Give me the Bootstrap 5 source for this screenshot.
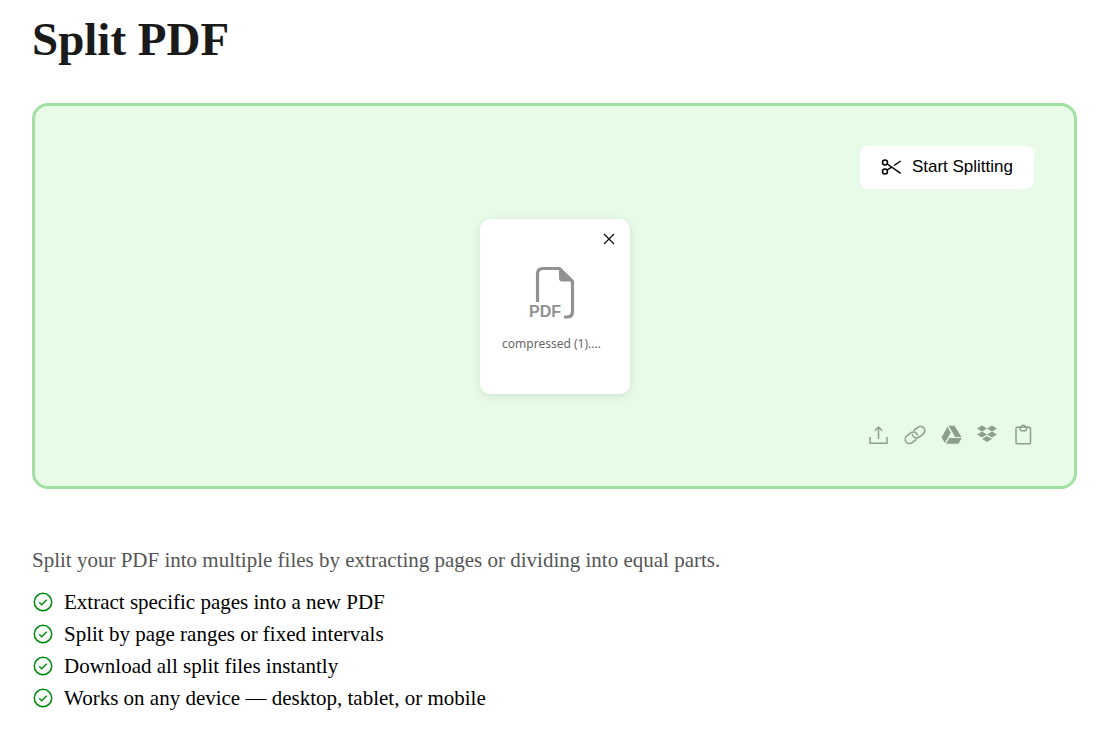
<!DOCTYPE html>
<html lang="en">
<head>
<meta charset="utf-8">
<meta name="viewport" content="width=device-width, initial-scale=1">
<title>Split PDF</title>
<link href="https://cdn.jsdelivr.net/npm/bootstrap@5.3.0/dist/css/bootstrap.min.css" rel="stylesheet">
<style>
  body { font-family: Georgia, "Liberation Serif", serif; color: #000; background: #fff; }
  .page { padding: 13px 27px 20px 32px; }
  .page-title { font-size: 47px; line-height: 52px; font-weight: 700; color: #1a1a1a; margin-bottom: 38px; }
  .drop-zone { background: #e8fbe8; border: 3px solid #a0e0a0; border-radius: 16px; padding: 40px; gap: 30px; margin-bottom: 57px; }
  .start-btn { --bs-btn-color: #000; --bs-btn-bg: #fff; --bs-btn-hover-bg: #f4f4f4; font: 17px/25px "Liberation Sans", sans-serif; padding: 7px 20px 9px; border-radius: 8px; gap: 9px; }
  .file-card { width: 150px; height: 175px; background: #fff; border-radius: 10px; box-shadow: 0 2px 10px rgba(0, 0, 0, .1); padding: 10px 16px 0 10px; }
  .close-btn { width: 22px; height: 20px; margin-right: -6px; }
  .file-name { font: 12px/18px "Noto Sans", sans-serif; color: #666; }
  .file-icon { margin: 14px 0 12px; }
  .sources { gap: 14px; color: #8c9f8c; }
  .plain-btn { background: none; border: 0; padding: 0; color: inherit; display: block; line-height: 0; }
  .source-btn { width: 22px; height: 22px; }
  .intro { font-size: 21px; line-height: 28px; color: #555; margin-bottom: 14px; }
  .features { font-size: 21px; line-height: 28px; }
  .features li { gap: 10px; }
</style>
</head>
<body>
<main class="page">
  <h1 class="page-title">Split PDF</h1>

  <section class="drop-zone d-flex flex-column" aria-label="Files">
    <button type="button" class="btn start-btn d-inline-flex align-items-center align-self-end">
      <svg width="22" height="22" viewBox="0 0 22 22" fill="none" stroke="currentColor" stroke-width="1.5" aria-hidden="true">
        <circle cx="4" cy="6.500" r="2.500"/><circle cx="4" cy="15.500" r="2.500"/>
        <path d="M6.200 8 19.700 17.300M6.200 14l4.800-3.200M13 9.500 19.700 5"/>
      </svg>
      <span>Start Splitting</span>
    </button>

    <article class="file-card d-flex flex-column align-items-center align-self-center">
      <button type="button" class="plain-btn close-btn align-self-end" aria-label="Remove file">
        <svg width="22" height="20" viewBox="0 0 22 20" fill="none" stroke="#111" stroke-width="1.3"><path d="m6 5 10 10M16 5 6 15"/></svg>
      </button>
      <svg class="file-icon" width="50" height="60" viewBox="0 0 50 60" fill="none" aria-hidden="true">
        <path d="M10.500 39V11q0-5.500 5.500-5.500H32.500L45.500 18.500V48.500q0 5.500-5.500 5.500H37" stroke="#919191" stroke-width="3.200"/>
        <path d="M32 4.500 46.500 18.500H35.500Q32 18.500 32 15Z" fill="#919191"/>
        <text x="2" y="54" font-family="Liberation Sans, sans-serif" font-size="16" font-weight="700" fill="#919191">PDF</text>
      </svg>
      <div class="file-name">compressed (1)....</div>
    </article>

    <div class="sources d-flex align-self-end">
      <button type="button" class="plain-btn source-btn" aria-label="Upload">
        <svg width="22" height="22" viewBox="0 0 22 22" fill="none" stroke="currentColor" stroke-width="1.5"><path d="M2 13v6.200h17V13M10.500 15V3M6.700 6.700 10.500 3l3.800 3.700"/></svg>
      </button>
      <button type="button" class="plain-btn source-btn" aria-label="Add from link">
        <svg width="22" height="22" viewBox="0 0 22 22" fill="none" stroke="currentColor" stroke-width="1.5" stroke-linecap="round"><g transform="rotate(-38 11 11)"><path d="M9 15.300H4a4.300 4.300 0 0 1 0-8.600H9a4.300 4.300 0 0 1 3.800 6.300"/><path d="M13 6.700h5a4.300 4.300 0 0 1 0 8.600H13a4.300 4.300 0 0 1-3.800-6.300"/></g></svg>
      </button>
      <button type="button" class="plain-btn source-btn" aria-label="Add from Google Drive">
        <svg width="22" height="22" viewBox="0 0 22 22" fill="currentColor"><path d="M8.500 1.700h6L21.500 13h-6.300ZM7.500 2.800l3.200 5.800L5 19 1.500 13.500ZM9.400 14h12.300l-3.300 5.700H6Z"/></svg>
      </button>
      <button type="button" class="plain-btn source-btn" aria-label="Add from Dropbox">
        <svg width="22" height="22" viewBox="0 0 22 22" fill="currentColor"><path d="m6 1.500 5 3-5 3-5-3ZM16 1.500l5 3-5 3-5-3ZM6 7.500l5 3-5 3-5-3ZM16 7.500l5 3-5 3-5-3ZM11 12l5 3-5 3.100-5-3.100Z"/></svg>
      </button>
      <button type="button" class="plain-btn source-btn" aria-label="Paste from clipboard">
        <svg width="22" height="22" viewBox="0 0 22 22" fill="none" stroke="currentColor" stroke-width="1.5"><rect x="4" y="3.300" width="14.500" height="16.500" rx="1.200"/><path d="M7.800 3.300q0 3.400 1.500 3.400h4q1.500 0 1.500-3.400h-1.500a2 2 0 0 0-4 0Z"/></svg>
      </button>
    </div>
  </section>

  <p class="intro">Split your PDF into multiple files by extracting pages or dividing into equal parts.</p>

  <svg class="d-none" aria-hidden="true">
    <symbol id="check" viewBox="0 0 22 22"><g fill="none" stroke="#008a0e" stroke-width="1.5"><circle cx="11" cy="11" r="8.700"/><path d="m7.200 11.200 2.500 2.500 5-5"/></g></symbol>
  </svg>
  <ul class="features list-unstyled d-grid gap-1 mb-0">
    <li class="d-flex align-items-center"><svg width="22" height="22" aria-hidden="true"><use href="#check"/></svg><span>Extract specific pages into a new PDF</span></li>
    <li class="d-flex align-items-center"><svg width="22" height="22" aria-hidden="true"><use href="#check"/></svg><span>Split by page ranges or fixed intervals</span></li>
    <li class="d-flex align-items-center"><svg width="22" height="22" aria-hidden="true"><use href="#check"/></svg><span>Download all split files instantly</span></li>
    <li class="d-flex align-items-center"><svg width="22" height="22" aria-hidden="true"><use href="#check"/></svg><span>Works on any device — desktop, tablet, or mobile</span></li>
  </ul>
</main>
<script src="https://cdn.jsdelivr.net/npm/bootstrap@5.3.0/dist/js/bootstrap.bundle.min.js"></script>
</body>
</html>
